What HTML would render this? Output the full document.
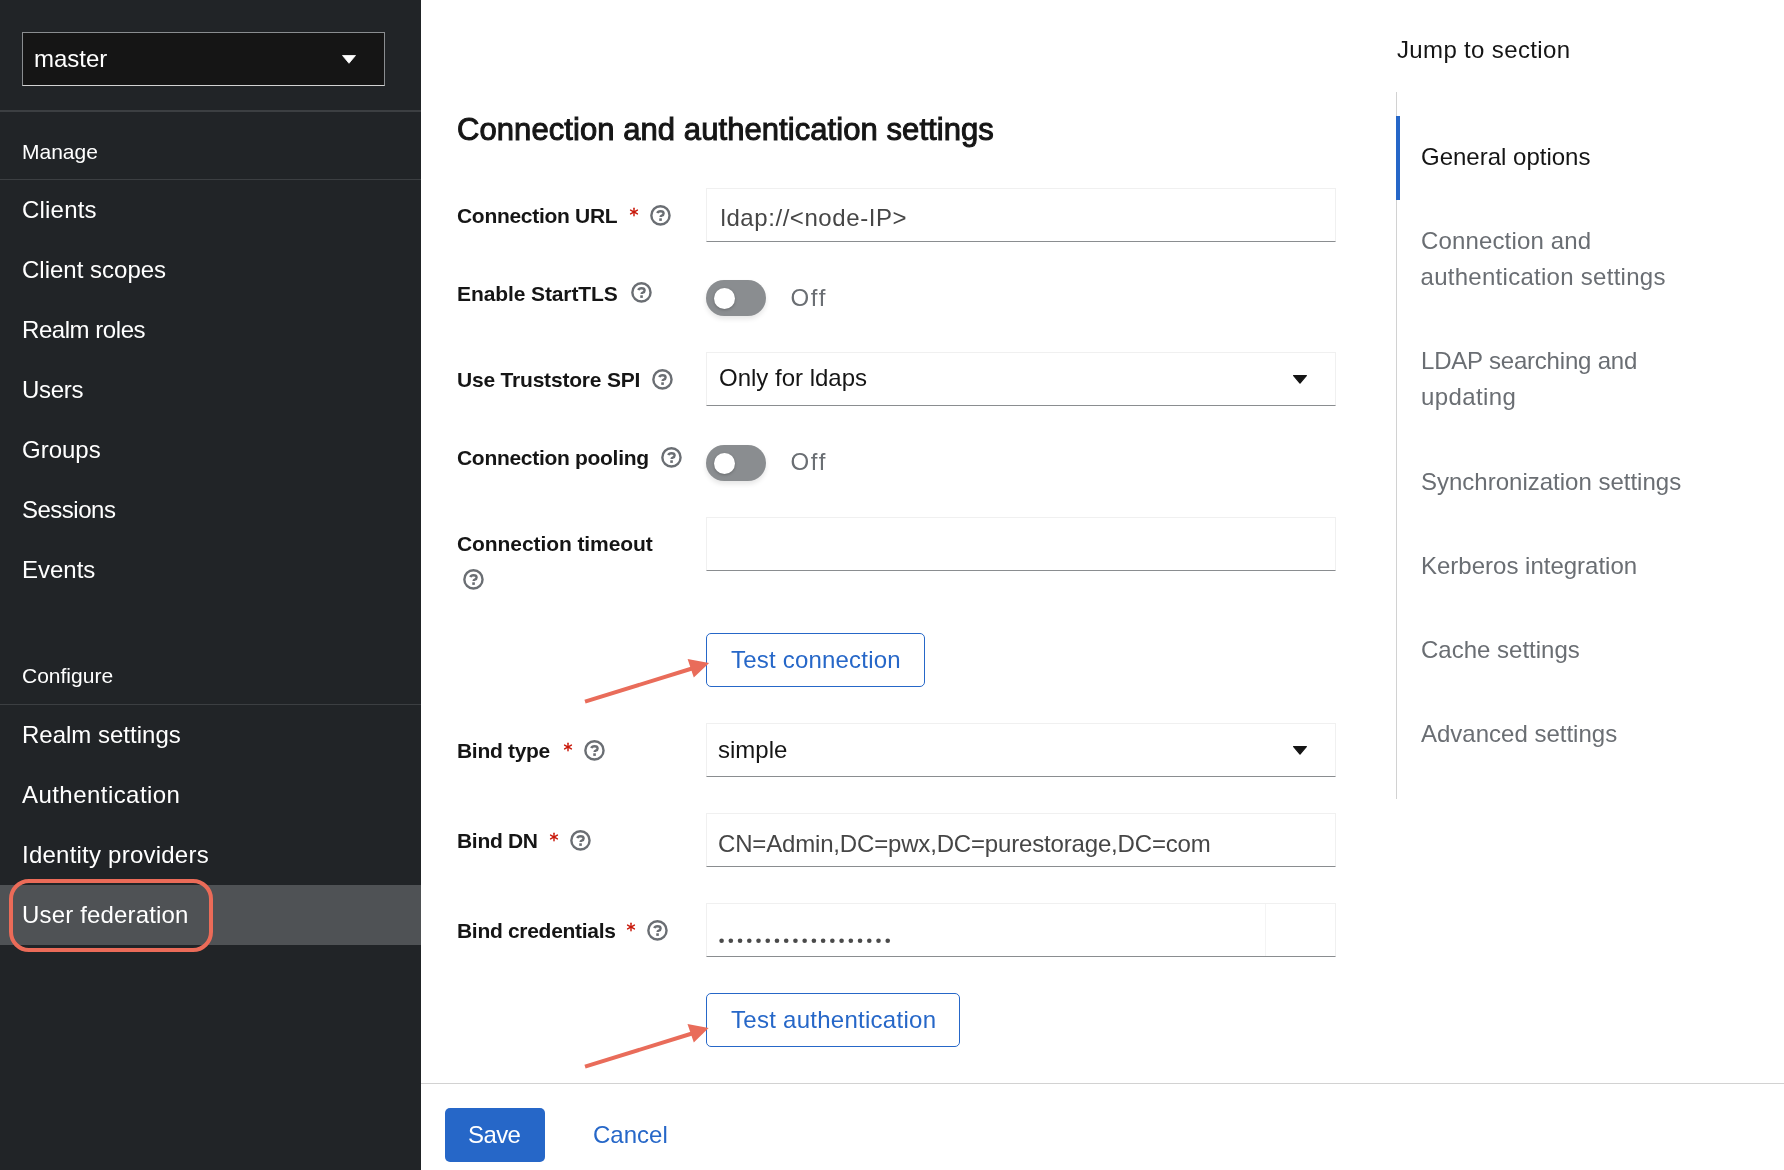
<!DOCTYPE html>
<html>
<head>
<meta charset="utf-8">
<style>
html,body{margin:0;padding:0;}
body{width:1784px;height:1170px;position:relative;overflow:hidden;background:#fff;font-family:"Liberation Sans",sans-serif;}
.t{position:absolute;white-space:nowrap;line-height:1;}
.s24{font-size:24px;}
.s21{font-size:21px;}
.w{color:#fff;}
#side{position:absolute;left:0;top:0;width:421px;height:1170px;background:#212427;}
.sep{position:absolute;left:0;width:421px;height:1px;background:#3c3f42;}
.lbl{font-size:21px;font-weight:700;color:#151515;left:457px;letter-spacing:-0.3px;}
.req{position:absolute;color:#c9190b;font-size:21px;font-weight:400;line-height:1;}
.help{position:absolute;width:21px;height:21px;}
.inp{position:absolute;left:706px;width:630px;box-sizing:border-box;border:1px solid #f0f0f0;border-bottom:1.5px solid #8a8d90;background:#fff;}
.val{font-size:24px;color:#464646;}
.caret{position:absolute;left:1293px;width:14px;height:9px;overflow:visible;}
.tog{position:absolute;left:706px;width:60px;height:36px;border-radius:18px;background:#8a8d90;box-shadow:0 3px 5px rgba(3,3,3,0.10);}
.tog::after{content:"";position:absolute;left:7.5px;top:7.5px;width:21px;height:21px;border-radius:50%;background:#fff;box-shadow:0 1px 3px rgba(0,0,0,.25);}
.off{font-size:24px;color:#6a6e73;left:790.5px;letter-spacing:1.7px;}
.btn2{position:absolute;left:706px;height:54px;box-sizing:border-box;border:1.5px solid #2667c8;border-radius:5px;}
.blue{color:#2667c8;}
.nav{font-size:24px;color:#6a6e73;left:1421px;}
</style>
</head>
<body>
<div id="root" style="position:absolute;left:0;top:0;width:1784px;height:1170px;will-change:transform;">
<!-- SIDEBAR -->
<div id="side">
  <div style="position:absolute;left:22px;top:32px;width:363px;height:54px;box-sizing:border-box;background:#151515;border:1px solid #8a8d90;border-bottom:1.5px solid #d2d2d2;"></div>
  <div class="t s24 w" style="left:34px;top:47px;">master</div>
  <svg style="position:absolute;left:342px;top:55px" width="14" height="9" viewBox="0 0 14 9"><path d="M0.5 0.5 H13.5 L7 8.3 Z" fill="#fff" stroke="#fff" stroke-width="0.8" stroke-linejoin="round"/></svg>
  <div class="sep" style="top:110px;height:2px;"></div>
  <div class="t s21 w" style="left:22px;top:141px;">Manage</div>
  <div class="sep" style="top:179px;"></div>
  <div class="t s24 w" style="left:22px;top:198px;letter-spacing:0.2px;">Clients</div>
  <div class="t s24 w" style="left:22px;top:258px;">Client scopes</div>
  <div class="t s24 w" style="left:22px;top:318px;letter-spacing:-0.45px;">Realm roles</div>
  <div class="t s24 w" style="left:22px;top:378px;letter-spacing:-0.3px;">Users</div>
  <div class="t s24 w" style="left:22px;top:438px;">Groups</div>
  <div class="t s24 w" style="left:22px;top:498px;letter-spacing:-0.5px;">Sessions</div>
  <div class="t s24 w" style="left:22px;top:558px;">Events</div>
  <div class="t s21 w" style="left:22px;top:665px;">Configure</div>
  <div class="sep" style="top:704px;"></div>
  <div class="t s24 w" style="left:22px;top:723px;">Realm settings</div>
  <div class="t s24 w" style="left:22px;top:783px;letter-spacing:0.45px;">Authentication</div>
  <div class="t s24 w" style="left:22px;top:843px;letter-spacing:0.23px;">Identity providers</div>
  <div style="position:absolute;left:0;top:885px;width:421px;height:60px;background:#4f5255;"></div>
  <div class="t s24 w" style="left:22px;top:903px;letter-spacing:0.17px;">User federation</div>
  <div style="position:absolute;left:9px;top:879px;width:204px;height:73px;box-sizing:border-box;border:4.3px solid #eb6b58;border-radius:20px;"></div>
</div>

<!-- RIGHT PANEL -->
<div class="t s24" style="left:1397px;top:38px;color:#151515;letter-spacing:0.35px;">Jump to section</div>
<div style="position:absolute;left:1396px;top:92px;width:1px;height:707px;background:#d2d2d2;"></div>
<div style="position:absolute;left:1396px;top:116px;width:4px;height:84px;background:#2667c8;"></div>
<div class="t nav" style="top:145px;color:#151515;">General options</div>
<div class="t nav" style="top:229px;letter-spacing:0.15px;">Connection and</div>
<div class="t nav" style="top:265px;left:1420.5px;letter-spacing:0.28px;">authentication settings</div>
<div class="t nav" style="top:349px;letter-spacing:-0.2px;">LDAP searching and</div>
<div class="t nav" style="top:385px;letter-spacing:0.4px;">updating</div>
<div class="t nav" style="top:470px;">Synchronization settings</div>
<div class="t nav" style="top:554px;">Kerberos integration</div>
<div class="t nav" style="top:638px;">Cache settings</div>
<div class="t nav" style="top:722px;">Advanced settings</div>

<!-- MAIN -->
<!--MAIN_START-->
<svg width="0" height="0" style="position:absolute">
  <defs>
    <symbol id="hq" viewBox="0 0 21 21">
      <circle cx="10.45" cy="10.4" r="9.1" fill="none" stroke="#6a6e73" stroke-width="2.4"/>
      <path d="M7.4 8.1 Q7.9 6.3 10.5 6.3 Q13.6 6.3 13.6 8.5 Q13.6 10 11.7 10.6 Q10.6 11 10.6 12" fill="none" stroke="#6a6e73" stroke-width="2.4" stroke-linecap="butt"/>
      <rect x="9.25" y="13.3" width="2.6" height="2.6" fill="#6a6e73"/>
    </symbol>
    <symbol id="cr" viewBox="0 0 14 9">
      <path d="M0.7 0.6 H13.3 L7 8.1 Z" fill="#151515" stroke="#151515" stroke-width="1.3" stroke-linejoin="round"/>
    </symbol>
  </defs>
</svg>
<div class="t" style="left:457px;top:114px;font-size:31px;color:#151515;-webkit-text-stroke:1px #151515;letter-spacing:0.07px;">Connection and authentication settings</div>

<!-- Connection URL -->
<div class="t lbl" style="top:205px;">Connection URL</div>
<svg style="position:absolute;left:628.5px;top:207px" width="10" height="10" viewBox="0 0 10 10"><g stroke="#c9190b" stroke-width="1.45" stroke-linecap="round"><line x1="5" y1="1.2" x2="5" y2="8.8"/><line x1="1.6" y1="3.1" x2="8.4" y2="6.9"/><line x1="1.6" y1="6.9" x2="8.4" y2="3.1"/></g></svg>
<svg class="help" style="left:650px;top:205px"><use href="#hq"/></svg>
<div class="inp" style="top:188px;height:54px;"></div>
<div class="t val" style="left:720.5px;top:206px;letter-spacing:0.57px;">ldap://&lt;node-IP&gt;</div>

<!-- StartTLS -->
<div class="t lbl" style="top:283px;letter-spacing:-0.1px;">Enable StartTLS</div>
<svg class="help" style="left:630.5px;top:282px"><use href="#hq"/></svg>
<div class="tog" style="top:280px;"></div>
<div class="t off" style="top:286px;">Off</div>

<!-- Truststore -->
<div class="t lbl" style="top:369px;letter-spacing:-0.2px;">Use Truststore SPI</div>
<svg class="help" style="left:652px;top:369px"><use href="#hq"/></svg>
<div class="inp" style="top:352px;height:54px;"></div>
<div class="t s24" style="left:719px;top:366px;color:#151515;">Only for ldaps</div>
<svg class="caret" style="top:375px"><use href="#cr"/></svg>

<!-- Pooling -->
<div class="t lbl" style="top:447px;">Connection pooling</div>
<svg class="help" style="left:661px;top:446.5px"><use href="#hq"/></svg>
<div class="tog" style="top:445px;"></div>
<div class="t off" style="top:450px;">Off</div>

<!-- Timeout -->
<div class="t lbl" style="top:533px;letter-spacing:-0.08px;">Connection timeout</div>
<svg class="help" style="left:463px;top:569px"><use href="#hq"/></svg>
<div class="inp" style="top:517px;height:54px;"></div>

<!-- Test connection -->
<div class="btn2" style="top:633px;width:219px;"></div>
<div class="t s24 blue" style="left:731px;top:648px;letter-spacing:0.2px;">Test connection</div>

<!-- Bind type -->
<div class="t lbl" style="top:740px;">Bind type</div>
<svg style="position:absolute;left:562.5px;top:742.2px" width="10" height="10" viewBox="0 0 10 10"><g stroke="#c9190b" stroke-width="1.45" stroke-linecap="round"><line x1="5" y1="1.2" x2="5" y2="8.8"/><line x1="1.6" y1="3.1" x2="8.4" y2="6.9"/><line x1="1.6" y1="6.9" x2="8.4" y2="3.1"/></g></svg>
<svg class="help" style="left:584px;top:740px"><use href="#hq"/></svg>
<div class="inp" style="top:723px;height:54px;"></div>
<div class="t s24" style="left:718px;top:738px;color:#151515;">simple</div>
<svg class="caret" style="top:746px"><use href="#cr"/></svg>

<!-- Bind DN -->
<div class="t lbl" style="top:830px;">Bind DN</div>
<svg style="position:absolute;left:549px;top:832.1px" width="10" height="10" viewBox="0 0 10 10"><g stroke="#c9190b" stroke-width="1.45" stroke-linecap="round"><line x1="5" y1="1.2" x2="5" y2="8.8"/><line x1="1.6" y1="3.1" x2="8.4" y2="6.9"/><line x1="1.6" y1="6.9" x2="8.4" y2="3.1"/></g></svg>
<svg class="help" style="left:570px;top:830px"><use href="#hq"/></svg>
<div class="inp" style="top:813px;height:54px;"></div>
<div class="t val" style="left:718px;top:832px;letter-spacing:-0.17px;">CN=Admin,DC=pwx,DC=purestorage,DC=com</div>

<!-- Bind credentials -->
<div class="t lbl" style="top:920px;">Bind credentials</div>
<svg style="position:absolute;left:625.7px;top:922px" width="10" height="10" viewBox="0 0 10 10"><g stroke="#c9190b" stroke-width="1.45" stroke-linecap="round"><line x1="5" y1="1.2" x2="5" y2="8.8"/><line x1="1.6" y1="3.1" x2="8.4" y2="6.9"/><line x1="1.6" y1="6.9" x2="8.4" y2="3.1"/></g></svg>
<svg class="help" style="left:647px;top:920px"><use href="#hq"/></svg>
<div class="inp" style="top:903px;height:54px;"></div>
<div style="position:absolute;left:1264.5px;top:904px;width:1px;height:52px;background:#f4f4f4;"></div>
<svg style="position:absolute;left:705px;top:920px" width="200" height="40"><g fill="#4a4a4a"><circle cx="16.60" cy="20.7" r="2.3"/><circle cx="25.83" cy="20.7" r="2.3"/><circle cx="35.06" cy="20.7" r="2.3"/><circle cx="44.29" cy="20.7" r="2.3"/><circle cx="53.52" cy="20.7" r="2.3"/><circle cx="62.75" cy="20.7" r="2.3"/><circle cx="71.98" cy="20.7" r="2.3"/><circle cx="81.21" cy="20.7" r="2.3"/><circle cx="90.44" cy="20.7" r="2.3"/><circle cx="99.67" cy="20.7" r="2.3"/><circle cx="108.90" cy="20.7" r="2.3"/><circle cx="118.13" cy="20.7" r="2.3"/><circle cx="127.36" cy="20.7" r="2.3"/><circle cx="136.59" cy="20.7" r="2.3"/><circle cx="145.82" cy="20.7" r="2.3"/><circle cx="155.05" cy="20.7" r="2.3"/><circle cx="164.28" cy="20.7" r="2.3"/><circle cx="173.51" cy="20.7" r="2.3"/><circle cx="182.74" cy="20.7" r="2.3"/></g></svg>

<!-- Test authentication -->
<div class="btn2" style="top:993px;width:254px;"></div>
<div class="t s24 blue" style="left:731px;top:1008px;letter-spacing:0.27px;">Test authentication</div>

<!-- arrows -->
<svg style="position:absolute;left:0;top:0" width="1784" height="1170">
  <g fill="#e96c5a" stroke="none">
    <line x1="585" y1="701.7" x2="692" y2="668.5" stroke="#e96c5a" stroke-width="4" stroke-linecap="butt"/>
    <polygon points="709.1,663.1 687.6,659 693.8,677.6"/>
    <line x1="585" y1="1066.7" x2="692" y2="1033.5" stroke="#e96c5a" stroke-width="4" stroke-linecap="butt"/>
    <polygon points="708.6,1028.1 687.5,1024.1 693.8,1042.5"/>
  </g>
</svg>

<!-- footer -->
<div style="position:absolute;left:421px;top:1083px;width:1363px;height:1px;background:#d2d2d2;"></div>
<div style="position:absolute;left:445px;top:1108px;width:100px;height:54px;border-radius:5px;background:#2667c8;"></div>
<div class="t s24 w" style="left:468px;top:1123px;letter-spacing:-0.6px;">Save</div>
<div class="t s24 blue" style="left:593px;top:1123px;">Cancel</div>
<!--MAIN_END-->
</div>
</body>
</html>
